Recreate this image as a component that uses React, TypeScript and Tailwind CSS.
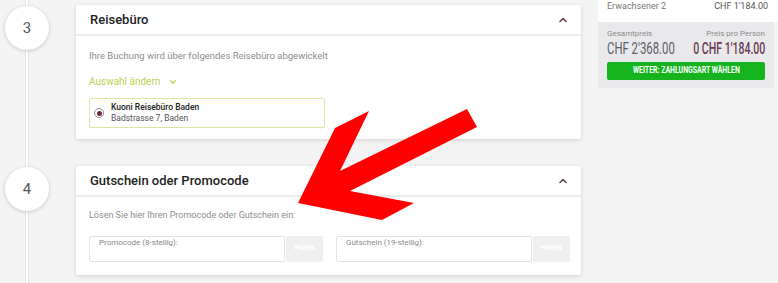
import { ChevronDown, ChevronUp } from "lucide-react";

const font = { fontFamily: "Roboto, 'Liberation Sans', sans-serif" };

function StepCircle({ n }: { n: number }) {
  return (
    <div className="flex h-[44px] w-[44px] shrink-0 items-center justify-center rounded-full bg-white text-[15px] text-[#555] shadow-[0_1px_4px_rgba(0,0,0,0.18)]">
      {n}
    </div>
  );
}

function CardHeader({ title }: { title: string }) {
  return (
    <div className="flex h-[31px] items-center justify-between border-b-2 border-[#ececec] pl-[14px] pr-[12px]">
      <span className="text-[13px] font-medium text-[#222]">{title}</span>
      <ChevronUp className="h-3 w-3 text-[#5a3a4a]" strokeWidth={3} />
    </div>
  );
}

function CodeInput({ label }: { label: string }) {
  return (
    <div className="flex">
      <div className="h-[26px] w-[196px] rounded-[2px] border border-[#e2e2e2] bg-white px-[9px] pt-[1px] text-[8px] leading-[10px] text-[#888]">
        {label}
      </div>
      <button className="ml-px flex h-[26px] w-[37px] items-center justify-center rounded-[2px] bg-[#efefef] text-[7px] font-bold text-white">
        <span className="inline-block scale-x-[0.8]">PRÜFEN</span>
      </button>
    </div>
  );
}

function Arrow() {
  return (
    <svg className="pointer-events-none absolute left-0 top-0" width="778" height="283">
      <polygon
        fill="#ff0000"
        points="298,203 335,128 369,111 340,171 467,109 477,127 350,191 414,203 382,220"
      />
    </svg>
  );
}

export default function App() {
  return (
    <div
      className="relative flex h-[283px] w-[778px] overflow-hidden bg-[#f4f4f5]"
      style={font}
    >
      {/* timeline + steps */}
      <div className="relative w-[598px] shrink-0">
        <div className="absolute bottom-0 left-[25px] top-0 w-[4px] border-x border-[#e4e4e6] bg-white" />
        <div className="relative flex flex-col gap-[27px] pt-[5px]">
          <div className="flex items-start">
            <div className="w-[76px] pl-[5px] pt-px">
              <StepCircle n={3} />
            </div>
            <div className="h-[134px] w-[505px] rounded-[2px] bg-white shadow-[0_1px_4px_rgba(0,0,0,0.15)]">
              <CardHeader title="Reisebüro" />
              <div className="px-[13px] pt-[13px]">
                <p className="text-[9.5px] text-[#8d8d8d]">
                  Ihre Buchung wird über folgendes Reisebüro abgewickelt
                </p>
                <div className="mt-[11px] flex items-center gap-[8px] text-[10px] text-[#bccf55]">
                  <span>Auswahl ändern</span>
                  <ChevronDown className="h-[10px] w-[10px]" strokeWidth={3} />
                </div>
                <div className="mt-[9px] flex h-[30px] w-[236px] items-center gap-[7px] rounded-[2px] border border-[#dbe79a] pl-[4px]">
                  <span className="flex h-[10px] w-[10px] items-center justify-center rounded-full border border-[#9a8a92] bg-white">
                    <span className="h-[5px] w-[5px] rounded-full bg-[#6d2a44]" />
                  </span>
                  <div className="leading-[11px]">
                    <div className="text-[8.5px] font-medium text-[#222]">Kuoni Reisebüro Baden</div>
                    <div className="text-[8.5px] text-[#555]">Badstrasse 7, Baden</div>
                  </div>
                </div>
              </div>
            </div>
          </div>

          <div className="flex items-start">
            <div className="w-[76px] pl-[5px] pt-px">
              <StepCircle n={4} />
            </div>
            <div className="h-[109px] w-[505px] rounded-[2px] bg-white shadow-[0_1px_4px_rgba(0,0,0,0.15)]">
              <CardHeader title="Gutschein oder Promocode" />
              <div className="px-[13px] pt-[12px]">
                <p className="text-[9px] text-[#8d8d8d]">
                  Lösen Sie hier Ihren Promocode oder Gutschein ein:
                </p>
                <div className="mt-[13px] flex gap-[13px]">
                  <CodeInput label="Promocode (8-stellig):" />
                  <CodeInput label="Gutschein (19-stellig):" />
                </div>
              </div>
            </div>
          </div>
        </div>
      </div>

      {/* sidebar */}
      <div className="w-[180px] shrink-0">
        <div className="flex h-[22px] items-start justify-between bg-white pl-[9px] pr-[10px] text-[9px] leading-[13px] text-[#777]">
          <span>Erwachsener 2</span>
          <span className="text-[#555]">CHF 1'184.00</span>
        </div>
        <div className="mr-[4px] h-[66px] rounded-b-[2px] bg-[#e9e9eb] px-[9px] pt-[7px]">
          <div className="flex justify-between text-[8px] leading-[10px] text-[#8a8a8a]">
            <span>Gesamtpreis</span>
            <span>Preis pro Person</span>
          </div>
          <div className="flex justify-between whitespace-nowrap text-[16px] leading-[20px]">
            <div className="flex w-[78px] justify-start">
              <span className="inline-block shrink-0 origin-left scale-x-[0.71] text-[#5b5b66]">
                CHF 2'368.00
              </span>
            </div>
            <div className="flex w-[78px] justify-end">
              <span className="inline-block shrink-0 origin-right scale-x-[0.66] font-medium text-[#6a3a52]">
                0 CHF 1'184.00
              </span>
            </div>
          </div>
          <button className="mt-[3px] flex h-[18px] w-full items-center justify-center rounded-[2px] bg-[#15b41f] text-[9px] font-bold text-white">
            <span className="inline-block scale-x-[0.77] whitespace-nowrap">
              WEITER: ZAHLUNGSART WÄHLEN
            </span>
          </button>
        </div>
      </div>

      <Arrow />
    </div>
  );
}
